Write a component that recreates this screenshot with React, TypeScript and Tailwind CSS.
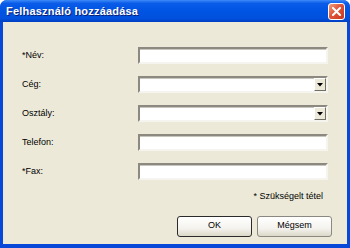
import React from 'react';

const fields = [
  { label: '*Név:', type: 'text' },
  { label: 'Cég:', type: 'select' },
  { label: 'Osztály:', type: 'select' },
  { label: 'Telefon:', type: 'text' },
  { label: '*Fax:', type: 'text' },
];

function CloseButton() {
  return (
    <div className="flex h-[17px] w-[17px] items-center justify-center rounded-[3px] border border-white bg-[linear-gradient(135deg,#f0a080_0%,#e0553a_45%,#c8371e_100%)]">
      <svg width="9" height="9" viewBox="0 0 9 9">
        <path d="M1 1 L8 8 M8 1 L1 8" stroke="white" strokeWidth="2" strokeLinecap="square" />
      </svg>
    </div>
  );
}

function Field({ type }: { type: string }) {
  return (
    <div className="flex h-[17px] w-[190px] border-2 border-t-[#8c8a80] border-l-[#8c8a80] border-b-[#f5f4ee] border-r-[#f5f4ee] bg-white">
      <div className="flex-1 border-t border-t-[#c8c6bc]" />
      {type === 'select' && (
        <div className="flex w-[12px] items-center justify-center border border-t-white border-l-white border-b-[#716f64] border-r-[#716f64] bg-[#ece9d8]">
          <svg width="6" height="4" viewBox="0 0 6 4">
            <path d="M0 0 H6 L3 3.5 Z" fill="black" />
          </svg>
        </div>
      )}
    </div>
  );
}

export default function App() {
  return (
    <div
      className="flex h-[248px] w-[350px] flex-col overflow-hidden rounded-t-[7px] bg-[#0848d8]"
      style={{ fontFamily: '"Liberation Sans", Arial, sans-serif' }}
    >
      {/* Title bar */}
      <div className="flex h-[22px] items-center justify-between bg-[linear-gradient(180deg,#3d8af7_0%,#0a5ce8_15%,#0054e3_50%,#0050dc_85%,#003dc0_100%)] pl-[6px] pr-[5px]">
        <span className="text-[11px] font-bold tracking-[0.2px] text-white [text-shadow:1px_1px_0_#0a1e78]">
          Felhasználó hozzáadása
        </span>
        <CloseButton />
      </div>

      {/* Body */}
      <div className="mx-[3px] mb-[4px] flex flex-1 flex-col bg-[#ece9d8] pl-[19px] pr-[15px] text-[9px] text-black">
        <div className="mt-[25px] flex flex-col gap-[12px] pr-[4px]">
          {fields.map((f) => (
            <div key={f.label} className="flex items-center justify-between">
              <span>{f.label}</span>
              <Field type={f.type} />
            </div>
          ))}
        </div>
        <div className="mt-[10px] flex justify-end pr-[9px]">
          <span>* Szükségelt tétel</span>
        </div>
        <div className="mt-[12px] flex justify-end gap-[5px]">
          <button className="flex h-[21px] w-[75px] items-center justify-center rounded-[3px] border border-[#2b2b2b] bg-[linear-gradient(180deg,#ffffff_0%,#f4f3ee_60%,#dcd8c8_100%)] text-[9px] text-black">
            OK
          </button>
          <button className="flex h-[21px] w-[75px] items-center justify-center rounded-[3px] border border-[#8a8880] bg-[linear-gradient(180deg,#ffffff_0%,#f4f3ee_60%,#dcd8c8_100%)] text-[9px] text-black">
            Mégsem
          </button>
        </div>
      </div>
    </div>
  );
}
